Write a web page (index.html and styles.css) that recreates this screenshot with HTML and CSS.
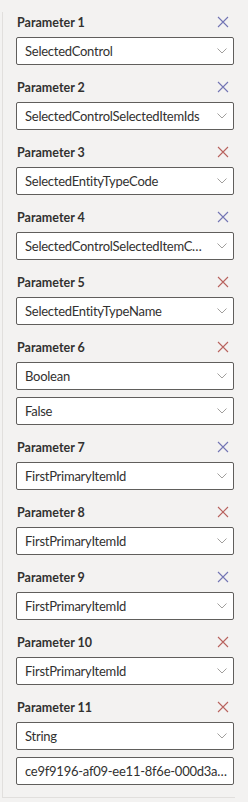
FILE: index.html
```
<!DOCTYPE html>
<html lang="en">
<head>
    <meta charset="UTF-8">
    <meta name="viewport" content="width=device-width, initial-scale=1.0">
    <title>Parameters</title>
    <link rel="stylesheet" href="styles.css">
</head>
<body>
    <div class="panel">

        <div class="param">
            <div class="param-head">
                <span class="param-label">Parameter 1</span>
                <button class="remove blue" title="Remove"><svg viewBox="0 0 12 12"><path d="M1 1 L11 11 M11 1 L1 11"/></svg></button>
            </div>
            <div class="field dropdown"><span class="value">SelectedControl</span><svg class="chevron" viewBox="0 0 10 6"><path d="M0.5 0.5 L5 5 L9.5 0.5"/></svg></div>
        </div>

        <div class="param">
            <div class="param-head">
                <span class="param-label">Parameter 2</span>
                <button class="remove blue" title="Remove"><svg viewBox="0 0 12 12"><path d="M1 1 L11 11 M11 1 L1 11"/></svg></button>
            </div>
            <div class="field dropdown"><span class="value">SelectedControlSelectedItemIds</span><svg class="chevron" viewBox="0 0 10 6"><path d="M0.5 0.5 L5 5 L9.5 0.5"/></svg></div>
        </div>

        <div class="param">
            <div class="param-head">
                <span class="param-label">Parameter 3</span>
                <button class="remove red" title="Remove"><svg viewBox="0 0 12 12"><path d="M1 1 L11 11 M11 1 L1 11"/></svg></button>
            </div>
            <div class="field dropdown"><span class="value">SelectedEntityTypeCode</span><svg class="chevron" viewBox="0 0 10 6"><path d="M0.5 0.5 L5 5 L9.5 0.5"/></svg></div>
        </div>

        <div class="param">
            <div class="param-head">
                <span class="param-label">Parameter 4</span>
                <button class="remove blue" title="Remove"><svg viewBox="0 0 12 12"><path d="M1 1 L11 11 M11 1 L1 11"/></svg></button>
            </div>
            <div class="field dropdown"><span class="value">SelectedControlSelectedItemCount</span><svg class="chevron" viewBox="0 0 10 6"><path d="M0.5 0.5 L5 5 L9.5 0.5"/></svg></div>
        </div>

        <div class="param">
            <div class="param-head">
                <span class="param-label">Parameter 5</span>
                <button class="remove red" title="Remove"><svg viewBox="0 0 12 12"><path d="M1 1 L11 11 M11 1 L1 11"/></svg></button>
            </div>
            <div class="field dropdown"><span class="value">SelectedEntityTypeName</span><svg class="chevron" viewBox="0 0 10 6"><path d="M0.5 0.5 L5 5 L9.5 0.5"/></svg></div>
        </div>

        <div class="param">
            <div class="param-head">
                <span class="param-label">Parameter 6</span>
                <button class="remove red" title="Remove"><svg viewBox="0 0 12 12"><path d="M1 1 L11 11 M11 1 L1 11"/></svg></button>
            </div>
            <div class="field dropdown"><span class="value">Boolean</span><svg class="chevron" viewBox="0 0 10 6"><path d="M0.5 0.5 L5 5 L9.5 0.5"/></svg></div>
            <div class="field dropdown"><span class="value">False</span><svg class="chevron" viewBox="0 0 10 6"><path d="M0.5 0.5 L5 5 L9.5 0.5"/></svg></div>
        </div>

        <div class="param">
            <div class="param-head">
                <span class="param-label">Parameter 7</span>
                <button class="remove blue" title="Remove"><svg viewBox="0 0 12 12"><path d="M1 1 L11 11 M11 1 L1 11"/></svg></button>
            </div>
            <div class="field dropdown"><span class="value">FirstPrimaryItemId</span><svg class="chevron" viewBox="0 0 10 6"><path d="M0.5 0.5 L5 5 L9.5 0.5"/></svg></div>
        </div>

        <div class="param">
            <div class="param-head">
                <span class="param-label">Parameter 8</span>
                <button class="remove red" title="Remove"><svg viewBox="0 0 12 12"><path d="M1 1 L11 11 M11 1 L1 11"/></svg></button>
            </div>
            <div class="field dropdown"><span class="value">FirstPrimaryItemId</span><svg class="chevron" viewBox="0 0 10 6"><path d="M0.5 0.5 L5 5 L9.5 0.5"/></svg></div>
        </div>

        <div class="param">
            <div class="param-head">
                <span class="param-label">Parameter 9</span>
                <button class="remove blue" title="Remove"><svg viewBox="0 0 12 12"><path d="M1 1 L11 11 M11 1 L1 11"/></svg></button>
            </div>
            <div class="field dropdown"><span class="value">FirstPrimaryItemId</span><svg class="chevron" viewBox="0 0 10 6"><path d="M0.5 0.5 L5 5 L9.5 0.5"/></svg></div>
        </div>

        <div class="param">
            <div class="param-head">
                <span class="param-label">Parameter 10</span>
                <button class="remove red" title="Remove"><svg viewBox="0 0 12 12"><path d="M1 1 L11 11 M11 1 L1 11"/></svg></button>
            </div>
            <div class="field dropdown"><span class="value">FirstPrimaryItemId</span><svg class="chevron" viewBox="0 0 10 6"><path d="M0.5 0.5 L5 5 L9.5 0.5"/></svg></div>
        </div>

        <div class="param">
            <div class="param-head">
                <span class="param-label">Parameter 11</span>
                <button class="remove red" title="Remove"><svg viewBox="0 0 12 12"><path d="M1 1 L11 11 M11 1 L1 11"/></svg></button>
            </div>
            <div class="field dropdown"><span class="value">String</span><svg class="chevron" viewBox="0 0 10 6"><path d="M0.5 0.5 L5 5 L9.5 0.5"/></svg></div>
            <div class="field text"><span class="value">ce9f9196-af09-ee11-8f6e-000d3a8f2c41</span></div>
        </div>

    </div>
</body>
</html>
```

FILE: styles.css
```
body {
    margin: 0;
    padding: 0;
    background-color: #f3f2f1;
    font-family: Lato, "Liberation Sans", sans-serif;
    color: #323130;
}
.panel {
    margin-left: 2px;
    border-left: 1px solid #e1dfdd;
    border-bottom: 1px solid #e1dfdd;
    padding: 0 0 12px 13px;
    width: 233px;
    box-sizing: border-box;
}
.param {
    margin-top: 12px;
    width: 218px;
}
.param-head {
    display: flex;
    align-items: center;
    justify-content: space-between;
    height: 20px;
    margin-bottom: 5px;
}
.param-label {
    font-size: 12.5px;
    font-weight: 700;
    padding-left: 1px;
}
.remove {
    border: none;
    background: none;
    padding: 0;
    margin-right: 5px;
    width: 12px;
    height: 12px;
    cursor: pointer;
    display: flex;
}
.remove svg {
    width: 12px;
    height: 12px;
    fill: none;
    stroke-width: 1.1;
}
.remove.blue svg {
    stroke: #7274b4;
}
.remove.red svg {
    stroke: #b8625e;
}
.field {
    display: flex;
    align-items: center;
    height: 28px;
    box-sizing: border-box;
    border: 1px solid #605e5c;
    border-radius: 2px;
    background-color: #ffffff;
    padding: 0 6px 0 8px;
    font-size: 13px;
    letter-spacing: -0.25px;
}
.field + .field {
    margin-top: 7px;
}
.field .value {
    flex: 1;
    min-width: 0;
    white-space: nowrap;
    overflow: hidden;
    text-overflow: ellipsis;
}
.dropdown .value {
    padding-right: 12px;
}
.text {
    padding-right: 2px;
}
.chevron {
    width: 10px;
    height: 6px;
    flex-shrink: 0;
    fill: none;
    stroke: #a19f9d;
    stroke-width: 1;
}
```
